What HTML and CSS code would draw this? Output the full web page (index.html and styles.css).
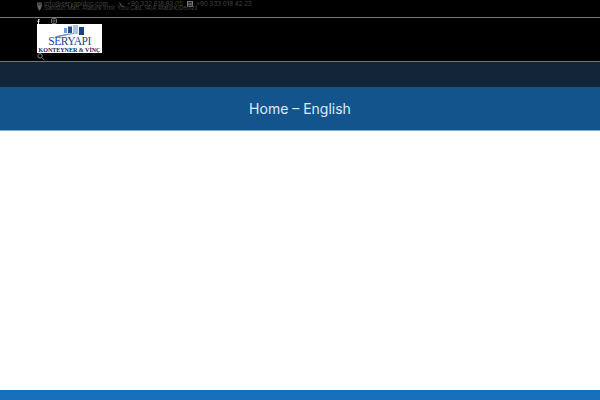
FILE: index.html
```html
<!DOCTYPE html>
<html lang="tr">
<head>
<meta charset="utf-8">
<title>Home – English</title>
<link rel="stylesheet" href="styles.css">
</head>
<body>
<header class="header">
  <div class="topbar">
    <div class="contact-row">
      <span class="contact c-mail"><svg class="ci" viewBox="0 0 6 5"><rect width="6" height="5" fill="#5a5a5a"/><path d="M0 1l3 2 3-2" stroke="#111" stroke-width=".7" fill="none"/></svg>info@seryapidoc.com</span>
      <span class="contact c-phone"><svg class="ci" viewBox="0 0 6 6"><path d="M1 0.5C1 3.500 3 5.500 5.500 5.500" stroke="#666" stroke-width="1.200" fill="none"/></svg>+90 332 618 83 05</span>
      <span class="contact c-fax"><svg class="ci ci-fax" viewBox="0 0 6 6"><rect width="6" height="6" fill="#777"/><rect x="1" y="1" width="4" height="1.500" fill="#222"/><rect x="1" y="3.500" width="4" height="1.500" fill="#333"/></svg>+90 333 018 42 23</span>
    </div>
    <div class="address"><svg class="ci" viewBox="0 0 4 5"><path d="M2 5L.3 2a1.800 1.800 0 1 1 3.400 0z" fill="#666"/></svg>Samsun Mah. Atatürk İrmir Yolu Cad. 14/A Atatürk/Denizli</div>
  </div>
  <div class="brand">
    <div class="social">
      <svg class="s-fb" viewBox="0 0 4 7"><path d="M1.300 7V3.800H.3V2.600h1V1.700C1.300.6 2 0 3 0h.8v1.200h-.6c-.5 0-.6.2-.6.600v.8h1.100l-.2 1.200h-.9V7z" fill="#f0f0f0"/></svg>
      <svg class="s-ig" viewBox="0 0 7 7"><rect x=".5" y=".5" width="6" height="6" rx="1.800" fill="none" stroke="#8a8a8a"/><circle cx="3.500" cy="3.500" r="1.300" fill="none" stroke="#8a8a8a" stroke-width=".8"/></svg>
    </div>
    <div class="logo">
      <svg class="logo-art" viewBox="0 0 46 12">
        <path d="M3 12C10 9.500 18 8 30 8C21 9 14 10.500 8 12z" fill="#7f8ea8"/>
        <rect x="13" y="3" width="3" height="5" fill="#6f9fd0"/>
        <rect x="17" y="1.500" width="4" height="6.500" fill="#27508f"/>
        <rect x="22" y="0" width="5" height="8.500" fill="#a9c6e4"/>
        <rect x="28" y="2" width="5" height="8" fill="#1e3f86"/>
      </svg>
      <div class="logo-name">SERYAPI</div>
      <div class="logo-sub">KONTEYNER &amp; VİNÇ</div>
    </div>
    <svg class="search" viewBox="0 0 8 8"><circle cx="3" cy="3" r="2.300" fill="none" stroke="#8a9088"/><path d="M5 5l2.500 2.500" stroke="#8a9088"/></svg>
  </div>
</header>
<nav class="navband"></nav>
<section class="titlebar"><h1 class="title">Home – English</h1></section>
<main class="content"></main>
<footer class="footer"></footer>
</body>
</html>
```

FILE: styles.css
```css
* { box-sizing: border-box; }
html, body { height: 100%; }
body {
  margin: 0;
  height: 400px;
  overflow: hidden;
  display: flex;
  flex-direction: column;
  background: #fff;
  font-family: "Inter", "Liberation Sans", sans-serif;
}
.header { background: #000; flex: none; }
.topbar {
  height: 18px;
  padding: 2px 0 0 37px;
  border-bottom: 1px solid #777;
  color: #444;
  font-size: 6.200px;
  line-height: 4px;
  white-space: nowrap;
  overflow: hidden;
}
.contact-row { display: flex; height: 4px; }
.contact { display: flex; align-items: center; gap: 2px; }
.c-mail { width: 82px; }
.c-phone { width: 68px; }
.c-phone, .c-fax { gap: 3px; }
.address { display: flex; align-items: center; gap: 2px; height: 4px; font-size: 5.700px; }
.ci { width: 5px; height: 5px; flex: none; }
.ci-fax { width: 6px; height: 6px; }
.brand {
  height: 44px;
  padding-left: 37px;
  border-bottom: 1px solid #6d7a7d;
  display: flex;
  flex-direction: column;
  align-items: flex-start;
}
.social { display: flex; height: 6px; gap: 11px; align-items: center; }
.s-fb { width: 3px; height: 5px; }
.s-ig { width: 6px; height: 6px; }
.logo {
  width: 65px;
  height: 31px;
  background: #fff;
  display: flex;
  flex-direction: column;
  align-items: center;
  font-family: "Liberation Serif", serif;
  overflow: hidden;
}
.logo-art { width: 46px; height: 12px; margin-top: 1px; margin-left: 8px; flex: none; }
.logo-name { font-size: 11.500px; line-height: 9px; color: #24468f; letter-spacing: -.5px; }
.logo-sub { font-size: 6px; line-height: 8px; font-weight: 700; color: #17224a; white-space: nowrap; }
.search { width: 8px; height: 8px; }
.navband { height: 25px; background: #112537; flex: none; }
.titlebar {
  height: 44px;
  padding-top: 1px;
  background: #14548c;
  border-bottom: 1px solid #7fa8d2;
  display: flex;
  align-items: center;
  justify-content: center;
  flex: none;
}
.title {
  margin: 0;
  color: #dcecf8;
  font-size: 14px;
  font-weight: 400;
  line-height: 18px;
}
.content { flex: 1; background: #fff; }
.footer { height: 10px; background: #1a6fbc; flex: none; }
```
